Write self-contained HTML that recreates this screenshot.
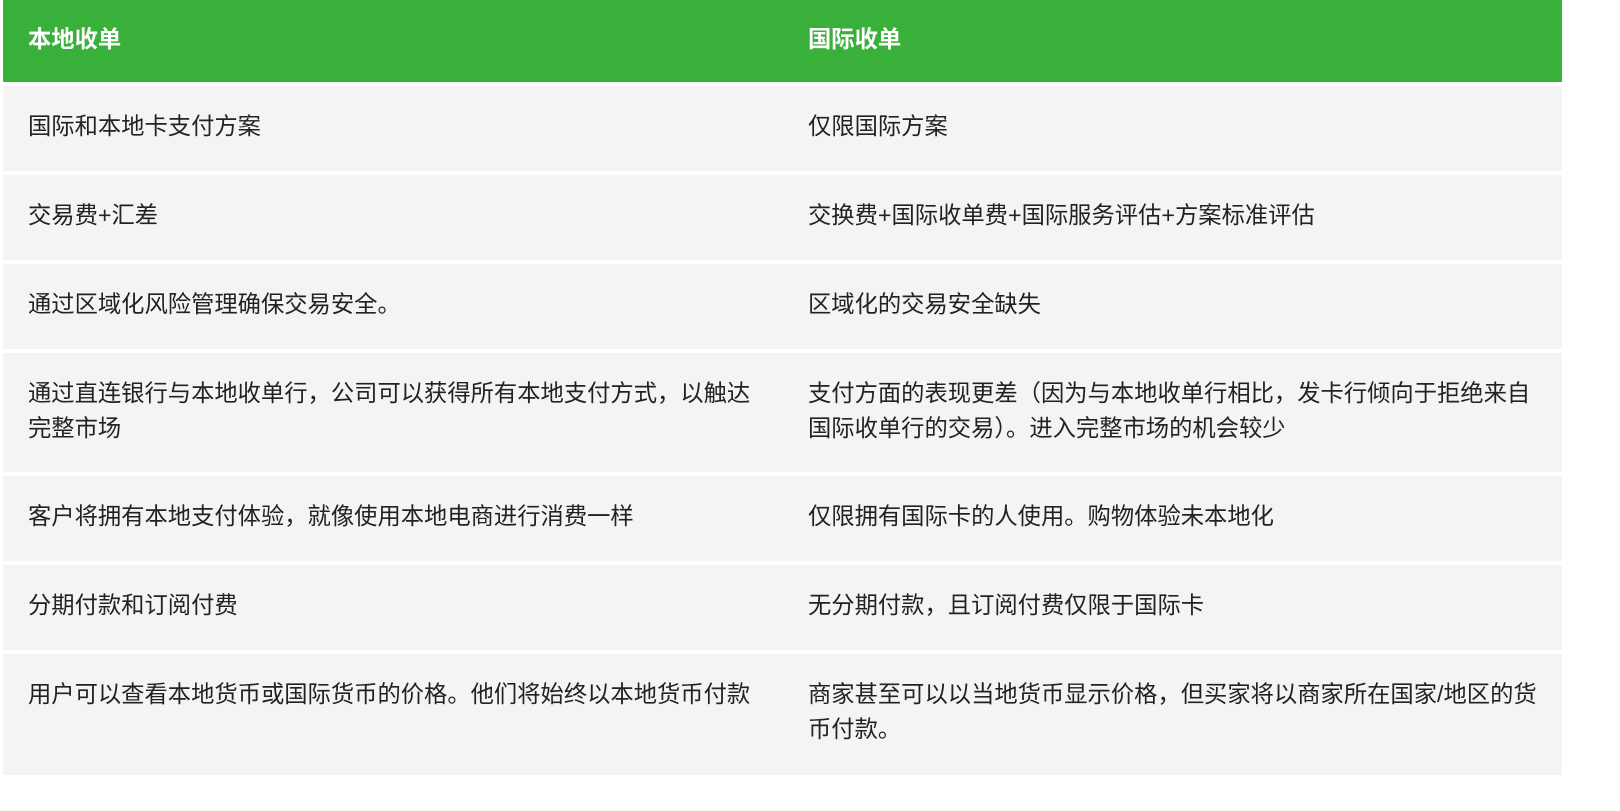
<!DOCTYPE html>
<html><head><meta charset="utf-8"><style>
body{margin:0;background:#fff;font-family:"Liberation Sans","Noto Sans CJK SC",sans-serif;}
.t{position:absolute;left:3px;top:0;width:1559px;}
.r{display:flex;background:#f4f4f4;margin-bottom:4px;align-items:flex-start;color:#222;font-size:23.3px;line-height:35px;}
.r div{box-sizing:border-box;padding:23px 25px 0;}
.r div:first-child{width:780px;}
.r div:last-child{width:779px;}
.h{background:#38b03a;color:#fff;font-weight:bold;height:82px;}
.h div{padding-top:22px;}
.s{height:85px;}
.d{height:119px;}
</style></head><body><div class="t">
<div class="r h"><div>本地收单</div><div>国际收单</div></div>
<div class="r s"><div>国际和本地卡支付方案</div><div>仅限国际方案</div></div>
<div class="r s"><div>交易费+汇差</div><div>交换费+国际收单费+国际服务评估+方案标准评估</div></div>
<div class="r s"><div>通过区域化风险管理确保交易安全。</div><div>区域化的交易安全缺失</div></div>
<div class="r d"><div>通过直连银行与本地收单行，公司可以获得所有本地支付方式，以触达<br>完整市场</div><div>支付方面的表现更差（因为与本地收单行相比，发卡行倾向于拒绝来自<br>国际收单行的交易）。进入完整市场的机会较少</div></div>
<div class="r s"><div>客户将拥有本地支付体验，就像使用本地电商进行消费一样</div><div>仅限拥有国际卡的人使用。购物体验未本地化</div></div>
<div class="r s"><div>分期付款和订阅付费</div><div>无分期付款，且订阅付费仅限于国际卡</div></div>
<div class="r d" style="height:121px"><div>用户可以查看本地货币或国际货币的价格。他们将始终以本地货币付款</div><div>商家甚至可以以当地货币显示价格，但买家将以商家所在国家/地区的货<br>币付款。</div></div>
</div></body></html>
